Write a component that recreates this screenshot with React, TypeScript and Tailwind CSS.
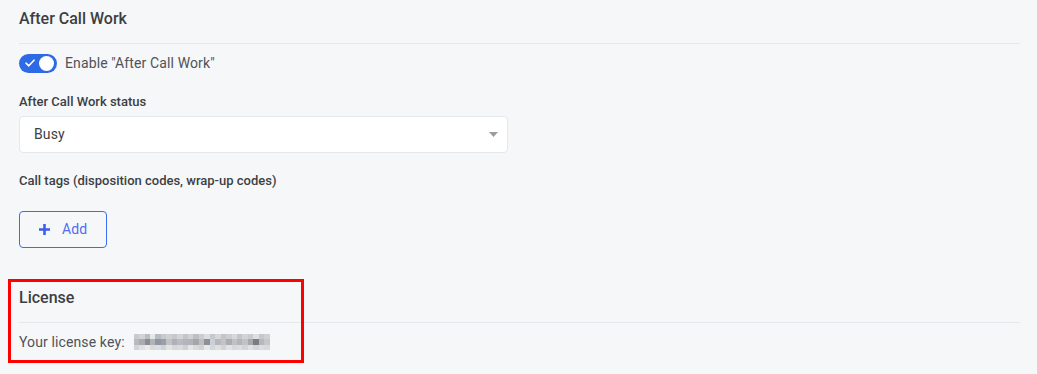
import React from "react";

const keyColors = [
  "#c9cacd", "#d2d3d6", "#b9bcc1", "#e6e6e8", "#b4bcc6", "#c7c9cd", "#cfd0d3", "#c6c8cb", "#d4d4d6", "#c2c6cc", "#d0d1d4", "#bcc0c5", "#cbcdcf", "#dcdde0", "#c5c8cc", "#d6d7d9", "#c3c5c9", "#cccdd0", "#d8d8da", "#c4c6ca", "#d2d3d5", "#c9cbce", "#dedfe1", "#c7c8cc", "#d0d1d4",
  "#b8babd", "#a9abae", "#8a8b8e", "#b0b3b8", "#8f96a1", "#9a9ea5", "#c1c3c7", "#aeb1b5", "#b9bbbe", "#aeb6c1", "#b1b3b7", "#a4a6aa", "#bdbfc2", "#8e9095", "#c8d0da", "#b5b7bb", "#c2c3c6", "#aaacb0", "#bfc1c4", "#b3b5b9", "#c0c2c6", "#a7a9ad", "#787c85", "#b6b8bc", "#c5c7cb",
  "#d3d4d6", "#dfe0e2", "#e8eaed", "#d8d9db", "#dcdde0", "#d1d2d5", "#e2e3e5", "#d6d7d9", "#dadbdd", "#cfd0d3", "#e4e5e7", "#d9dadc", "#d0d2d5", "#e6e8ea", "#d5d6d8", "#dedfe1", "#d2d3d6", "#e1e2e4", "#d7d8da", "#dbdcde", "#d3d4d7", "#e0e1e3", "#d4d5d8", "#dcdde0", "#d8d9dc",
];

function BlurredKey() {
  return (
    <div className="grid grid-cols-[repeat(25,5.44px)] grid-rows-[repeat(3,5.4px)] ml-[9px]">
      {keyColors.map((c, i) => (
        <div key={i} style={{ backgroundColor: c }} />
      ))}
    </div>
  );
}

export default function App() {
  return (
    <div
      className="relative w-[1037px] h-[374px] bg-[#f6f7f9] pl-[19px] pr-[17px] overflow-hidden text-[#3c4043]"
      style={{ fontFamily: "Roboto, 'Liberation Sans', sans-serif" }}
    >
      {/* After Call Work */}
      <section>
        <h2 className="h-[44px] pt-[8px] text-[16px] font-medium leading-[22px] text-[#3b3f44] border-b border-[#e6e8eb]">
          After Call Work
        </h2>
        <label className="flex items-center gap-[8px] mt-[9px] h-[20px]">
          <span className="relative w-[38px] h-[19px] rounded-full bg-[#2f6ae6] shrink-0">
            <svg className="absolute left-[6px] top-[5px]" width="10" height="8" viewBox="0 0 10 8">
              <path d="M1 4.2 L3.8 6.8 L9 1.2" fill="none" stroke="#ffffff" strokeWidth="1.6" strokeLinecap="round" strokeLinejoin="round" />
            </svg>
            <span className="absolute right-[3px] top-[2px] w-[15px] h-[15px] rounded-full bg-white" />
          </span>
          <span className="text-[14px] tracking-[0.12px] text-[#4f5357]">Enable "After Call Work"</span>
        </label>

        <div className="mt-[20px] text-[13px] font-medium leading-[18px] text-[#3c4043]">After Call Work status</div>
        <div className="mt-[5px] w-[489px] h-[37px] bg-white border border-[#e6e8eb] rounded-[4px] flex items-center justify-between pl-[14px] pr-[9px]">
          <span className="text-[14px] tracking-[0.12px] text-[#3c4043]">Busy</span>
          <svg width="9" height="6" viewBox="0 0 9 6">
            <path d="M0 0 L9 0 L4.5 5 Z" fill="#9a9ca0" />
          </svg>
        </div>

        <div className="mt-[19px] text-[13px] font-medium leading-[18px] text-[#3c4043]">
          Call tags (disposition codes, wrap-up codes)
        </div>
        <button className="mt-[21px] w-[88px] h-[37px] border border-[#3a6ef0] rounded-[4px] flex items-center pl-[18px] gap-[11px] text-[#4f6ef2]">
          <svg width="13" height="13" viewBox="0 0 13 13">
            <path d="M6.5 1 V12 M1 6.5 H12" stroke="#3a5fe8" strokeWidth="2.6" />
          </svg>
          <span className="text-[14px] tracking-[0.12px]">Add</span>
        </button>
      </section>

      {/* License */}
      <section className="mt-[32px]">
        <h2 className="h-[43px] pt-[7px] text-[16px] font-medium leading-[22px] text-[#3b3f44] border-b border-[#e6e8eb]">
          License
        </h2>
        <div className="flex items-center mt-[10px] h-[18px]">
          <span className="text-[14px] tracking-[0.12px] text-[#4f5357]">Your license key:</span>
          <BlurredKey />
        </div>
      </section>

      {/* annotation */}
      <div className="absolute left-[8px] top-[279px] w-[296px] h-[84px] border-[3px] border-[#ff0000] pointer-events-none" />
    </div>
  );
}
